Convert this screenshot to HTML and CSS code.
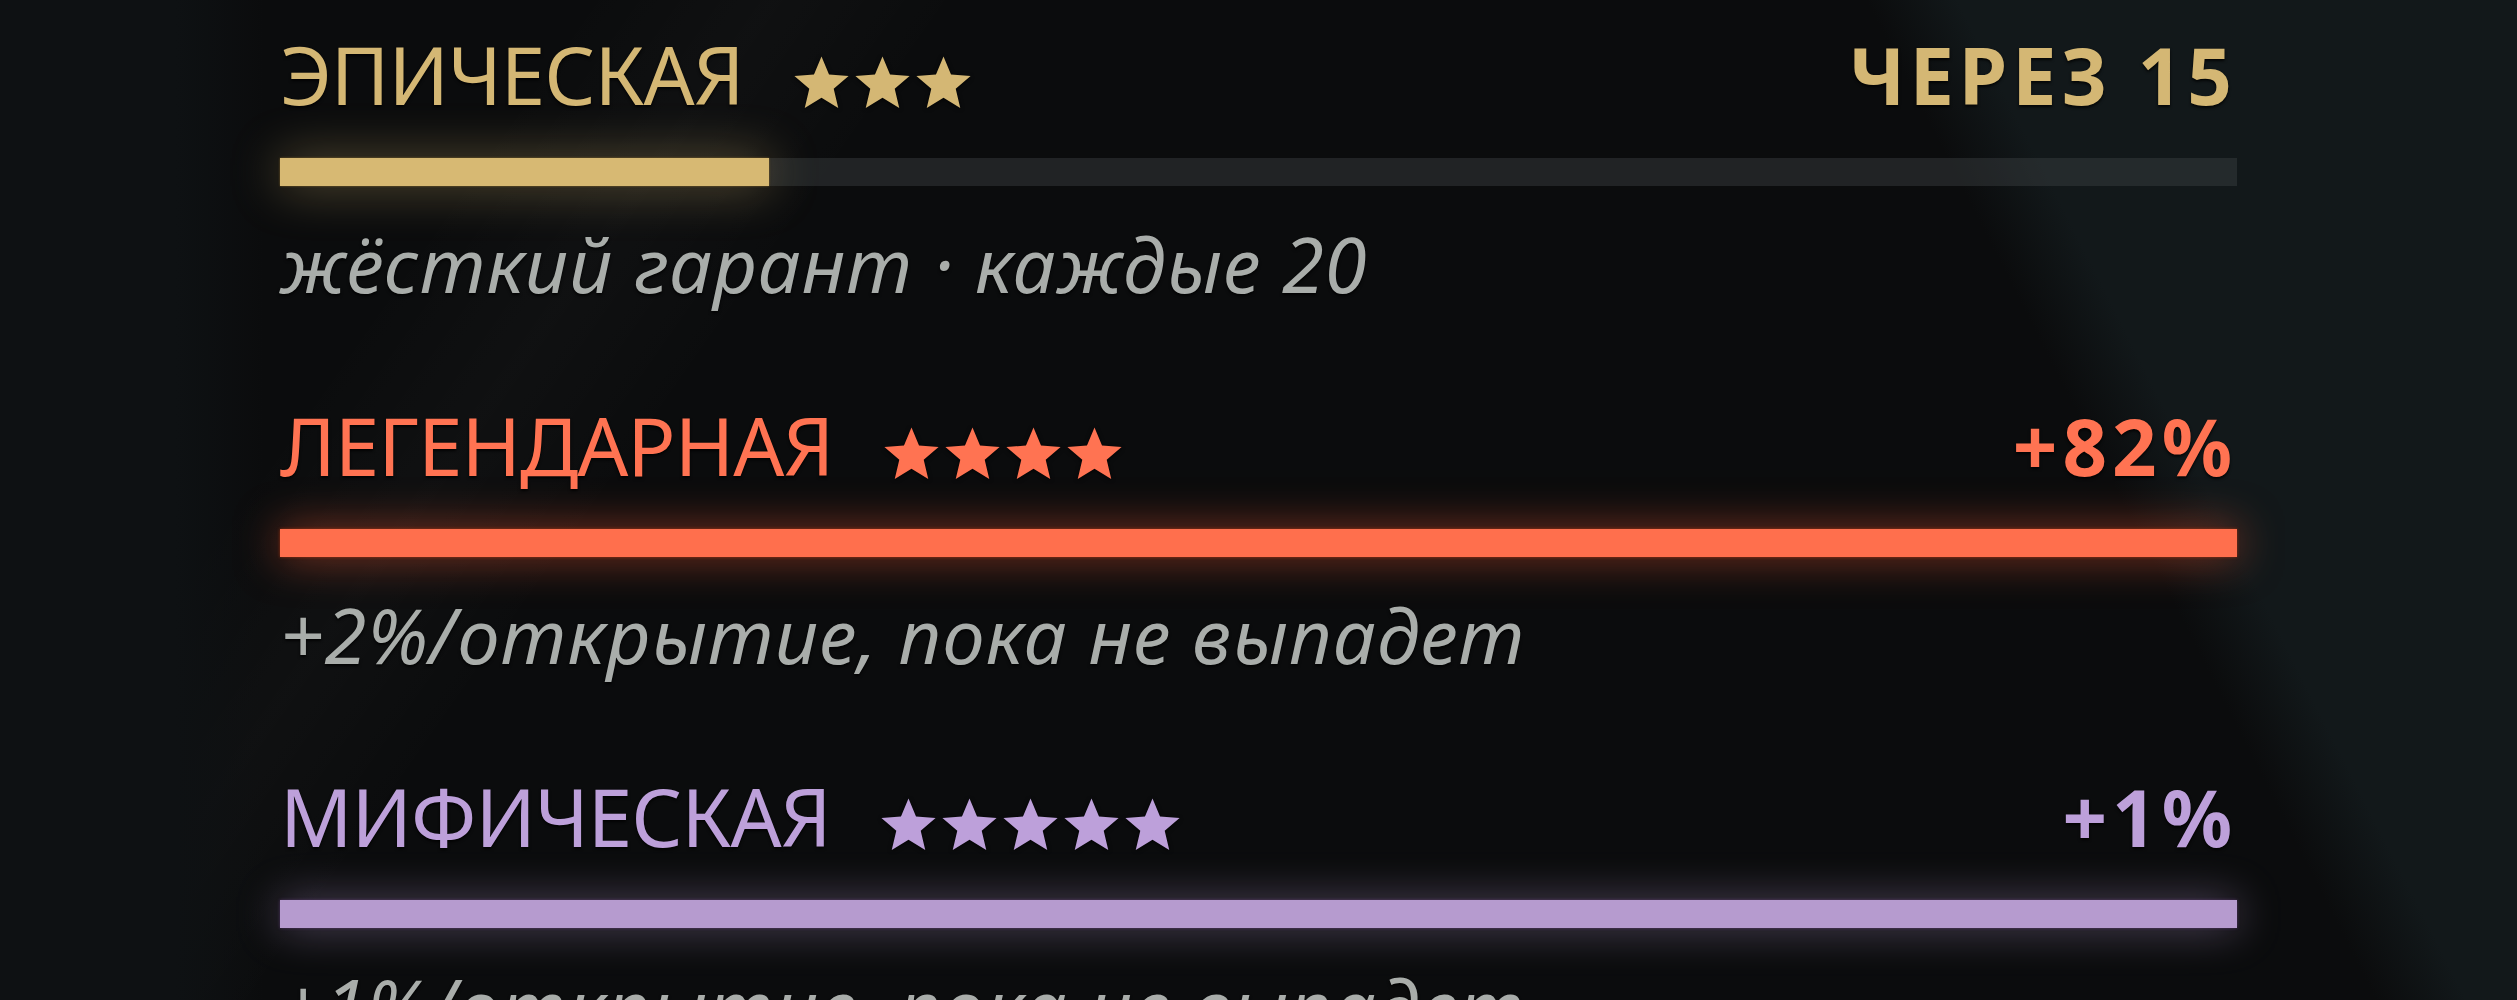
FILE: index.html
```html
<!DOCTYPE html>
<html>
<head>
    <title>Гарант редкости</title>
    <link rel="stylesheet" href="styles.css">
</head>
<body>
    <div class="pity">
        <div class="tier epic">
            <div class="tier-head">
                <span class="tier-name">ЭПИЧЕСКАЯ<span class="stars"><svg viewBox="0 0 24 24"><polygon points="12,0.8 15.17,8.43 23.41,9.09 17.14,14.47 19.05,22.51 12,18.2 4.95,22.51 6.86,14.47 0.59,9.09 8.83,8.43"/></svg><svg viewBox="0 0 24 24"><polygon points="12,0.8 15.17,8.43 23.41,9.09 17.14,14.47 19.05,22.51 12,18.2 4.95,22.51 6.86,14.47 0.59,9.09 8.83,8.43"/></svg><svg viewBox="0 0 24 24"><polygon points="12,0.8 15.17,8.43 23.41,9.09 17.14,14.47 19.05,22.51 12,18.2 4.95,22.51 6.86,14.47 0.59,9.09 8.83,8.43"/></svg></span></span>
                <span class="tier-value">ЧЕРЕЗ 15</span>
            </div>
            <div class="track"><div class="fill" style="width: 25%"></div></div>
            <div class="tier-note">жёсткий гарант · каждые 20</div>
        </div>

        <div class="tier legendary">
            <div class="tier-head">
                <span class="tier-name">ЛЕГЕНДАРНАЯ<span class="stars"><svg viewBox="0 0 24 24"><polygon points="12,0.8 15.17,8.43 23.41,9.09 17.14,14.47 19.05,22.51 12,18.2 4.95,22.51 6.86,14.47 0.59,9.09 8.83,8.43"/></svg><svg viewBox="0 0 24 24"><polygon points="12,0.8 15.17,8.43 23.41,9.09 17.14,14.47 19.05,22.51 12,18.2 4.95,22.51 6.86,14.47 0.59,9.09 8.83,8.43"/></svg><svg viewBox="0 0 24 24"><polygon points="12,0.8 15.17,8.43 23.41,9.09 17.14,14.47 19.05,22.51 12,18.2 4.95,22.51 6.86,14.47 0.59,9.09 8.83,8.43"/></svg><svg viewBox="0 0 24 24"><polygon points="12,0.8 15.17,8.43 23.41,9.09 17.14,14.47 19.05,22.51 12,18.2 4.95,22.51 6.86,14.47 0.59,9.09 8.83,8.43"/></svg></span></span>
                <span class="tier-value">+82%</span>
            </div>
            <div class="track"><div class="fill" style="width: 100%"></div></div>
            <div class="tier-note">+2%/открытие, пока не выпадет</div>
        </div>

        <div class="tier mythic">
            <div class="tier-head">
                <span class="tier-name">МИФИЧЕСКАЯ<span class="stars"><svg viewBox="0 0 24 24"><polygon points="12,0.8 15.17,8.43 23.41,9.09 17.14,14.47 19.05,22.51 12,18.2 4.95,22.51 6.86,14.47 0.59,9.09 8.83,8.43"/></svg><svg viewBox="0 0 24 24"><polygon points="12,0.8 15.17,8.43 23.41,9.09 17.14,14.47 19.05,22.51 12,18.2 4.95,22.51 6.86,14.47 0.59,9.09 8.83,8.43"/></svg><svg viewBox="0 0 24 24"><polygon points="12,0.8 15.17,8.43 23.41,9.09 17.14,14.47 19.05,22.51 12,18.2 4.95,22.51 6.86,14.47 0.59,9.09 8.83,8.43"/></svg><svg viewBox="0 0 24 24"><polygon points="12,0.8 15.17,8.43 23.41,9.09 17.14,14.47 19.05,22.51 12,18.2 4.95,22.51 6.86,14.47 0.59,9.09 8.83,8.43"/></svg><svg viewBox="0 0 24 24"><polygon points="12,0.8 15.17,8.43 23.41,9.09 17.14,14.47 19.05,22.51 12,18.2 4.95,22.51 6.86,14.47 0.59,9.09 8.83,8.43"/></svg></span></span>
                <span class="tier-value">+1%</span>
            </div>
            <div class="track"><div class="fill" style="width: 100%"></div></div>
            <div class="tier-note">+1%/открытие, пока не выпадет</div>
        </div>
    </div>
</body>
</html>
```

FILE: styles.css
```css
html,
body {
    height: 100%;
}

body {
    margin: 0;
    overflow: hidden;
    font-family: "Noto Sans", "Open Sans", sans-serif;
    background-color: #0b0c0d;
    background-image:
        linear-gradient(63deg, rgba(18, 24, 26, 0) 78.5%, #12181a 81.5%),
        linear-gradient(90deg, #0e1113 0, #0e1113 7%, rgba(14, 17, 19, 0) 10.5%),
        linear-gradient(125deg, rgba(255, 255, 255, 0) 18%, rgba(255, 255, 255, 0.018) 24%, rgba(255, 255, 255, 0) 30%);
}

.pity {
    padding: 34px 280px 0;
}

.tier {
    margin-bottom: 103px;
}

.tier-head {
    display: flex;
    justify-content: space-between;
    align-items: baseline;
    height: 80px;
    line-height: 80px;
}

.tier-name {
    font-size: 80px;
    letter-spacing: -1px;
    text-shadow: 0 2px 3px rgba(0, 0, 0, 0.8);
}

.stars {
    display: inline-flex;
    gap: 4px;
    margin-left: 50px;
    vertical-align: -7px;
}

.stars svg {
    width: 57px;
    height: 58px;
    fill: currentColor;
    filter: drop-shadow(0 1px 2px rgba(0, 0, 0, 0.8));
}

.tier-value {
    font-size: 78px;
    font-weight: 700;
    letter-spacing: 5px;
    text-shadow: 0 2px 3px rgba(0, 0, 0, 0.8);
}

.track {
    height: 28px;
    margin-top: 44px;
    background: rgba(60, 64, 66, 0.45);
}

.fill {
    height: 100%;
}

.tier-note {
    margin-top: 40px;
    font-size: 76px;
    line-height: 76px;
    font-style: italic;
    letter-spacing: 1px;
    color: #a9adaa;
    text-shadow: 0 2px 3px rgba(0, 0, 0, 0.8);
}

.epic .tier-head {
    color: #d4b774;
}

.epic .fill {
    background: #d7b973;
    box-shadow: 0 0 50px rgba(215, 185, 115, 0.45), 0 0 2px rgba(120, 90, 30, 0.9);
}

.legendary .tier-head {
    color: #ff7352;
}

.legendary .fill {
    background: #ff6f4d;
    box-shadow: 0 0 44px rgba(255, 95, 55, 0.55), 0 0 3px rgba(140, 40, 10, 0.9);
}

.mythic .tier-head {
    color: #bda0da;
}

.mythic .fill {
    background: #b69bcf;
    box-shadow: 0 0 44px rgba(182, 155, 207, 0.45), 0 0 3px rgba(70, 40, 90, 0.9);
}
```
